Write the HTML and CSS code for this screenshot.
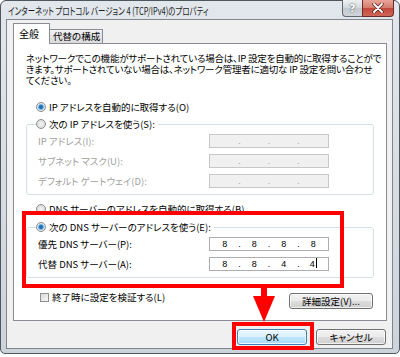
FILE: index.html
```html
<!DOCTYPE html>
<html lang="ja">
<head>
    <meta charset="UTF-8">
    <title>インターネット プロトコル バージョン 4 (TCP/IPv4)のプロパティ</title>
    <link rel="stylesheet" href="styles.css">
</head>
<body>

    <div class="window">
        <div class="title-bar">
            <span class="title">インターネット プロトコル バージョン 4 (TCP/IPv4)のプロパティ</span>
            <div class="caption-buttons">
                <span class="cap help">?</span>
                <span class="cap close">
                    <svg width="12" height="10" viewBox="0 0 12 10">
                        <path d="M2 1 L10 9 M10 1 L2 9" stroke="#5a2520" stroke-width="3.4" stroke-linecap="round"/>
                        <path d="M2 1 L10 9 M10 1 L2 9" stroke="#fff" stroke-width="1.8" stroke-linecap="round"/>
                    </svg>
                </span>
            </div>
        </div>

        <div class="client">
            <div class="tabs">
                <div class="tab active">全般</div>
                <div class="tab">代替の構成</div>
            </div>

            <div class="panel">
                <p class="desc">ネットワークでこの機能がサポートされている場合は、IP 設定を自動的に取得することがで<br>きます。サポートされていない場合は、ネットワーク管理者に適切な IP 設定を問い合わせ<br>てください。</p>

                <div class="option first"><span class="radio on"></span>IP アドレスを自動的に取得する(O)</div>

                <fieldset class="group">
                    <legend><span class="radio"></span>次の IP アドレスを使う(S):</legend>
                    <div class="row off">
                        <span class="label">IP アドレス(I):</span>
                        <div class="ip disabled"><span></span><i>.</i><span></span><i>.</i><span></span><i>.</i><span></span></div>
                    </div>
                    <div class="row off">
                        <span class="label">サブネット マスク(U):</span>
                        <div class="ip disabled"><span></span><i>.</i><span></span><i>.</i><span></span><i>.</i><span></span></div>
                    </div>
                    <div class="row off">
                        <span class="label">デフォルト ゲートウェイ(D):</span>
                        <div class="ip disabled"><span></span><i>.</i><span></span><i>.</i><span></span><i>.</i><span></span></div>
                    </div>
                </fieldset>

                <div class="option second"><span class="radio"></span>DNS サーバーのアドレスを自動的に取得する(B)</div>

                <fieldset class="group dns">
                    <legend><span class="radio on"></span>次の DNS サーバーのアドレスを使う(E):</legend>
                    <div class="row">
                        <span class="label">優先 DNS サーバー(P):</span>
                        <div class="ip"><span>8</span><i>.</i><span>8</span><i>.</i><span>8</span><i>.</i><span>8</span></div>
                    </div>
                    <div class="row">
                        <span class="label">代替 DNS サーバー(A):</span>
                        <div class="ip"><span>8</span><i>.</i><span>8</span><i>.</i><span>4</span><i>.</i><span>4<b class="caret"></b></span></div>
                    </div>
                </fieldset>

                <div class="panel-foot">
                    <div class="check-row"><span class="checkbox"></span>終了時に設定を検証する(L)</div>
                    <button class="btn advanced">詳細設定(V)...</button>
                </div>
            </div>

            <div class="dialog-buttons">
                <button class="btn default">OK</button>
                <button class="btn">キャンセル</button>
            </div>
        </div>

        <!-- red marks over the screenshot -->
        <div class="mark mark-dns"></div>
        <div class="mark mark-ok"></div>
        <svg class="arrow" width="22" height="37" viewBox="0 0 22 37">
            <rect x="8" y="0" width="6" height="11" fill="#f00"/>
            <polygon points="0,10 22,10 11,36" fill="#f00"/>
        </svg>
    </div>

</body>
</html>
```

FILE: styles.css
```css
* {
    box-sizing: border-box;
}

body {
    margin: 0;
    background: #fff;
    font-family: "Noto Sans CJK JP", sans-serif;
    font-size: 9.5px;
    font-feature-settings: "palt";
    color: #000;
}

.window {
    position: relative;
    width: 400px;
    height: 354px;
    border: 1px solid #4e565e;
    border-radius: 6px 6px 5px 5px;
    background: linear-gradient(to bottom, #e2e7ec, #ccd3da);
    display: flex;
    flex-direction: column;
}

.title-bar {
    height: 18px;
    display: flex;
    justify-content: space-between;
    align-items: flex-start;
    padding: 0 5px 0 7px;
}

/* the shot is squeezed sideways, so the caption is too */
.title {
    display: inline-block;
    font-size: 10.5px;
    line-height: 19px;
    color: #1e1e1e;
    white-space: nowrap;
    transform: scaleX(0.71);
    transform-origin: left center;
}

.caption-buttons {
    display: flex;
    margin-top: -1px;
}

.cap {
    height: 17px;
    display: flex;
    justify-content: center;
    align-items: center;
    border: 1px solid #5f6870;
    border-top: none;
}

.help {
    width: 20px;
    border-right: none;
    border-radius: 0 0 0 4px;
    background: linear-gradient(to bottom, #eef0f2, #d3d8dd 50%, #c2c8ce 51%, #d0d5da);
    color: #fff;
    font-family: "DejaVu Sans", sans-serif;
    font-weight: bold;
    font-size: 11px;
    text-shadow: 0 0 2px #59616a, 0 0 1px #59616a;
}

.close {
    width: 32px;
    border-radius: 0 0 4px 0;
    border-color: #6a2c26;
    background: linear-gradient(to bottom, #e8a599, #d47a6c 50%, #c2473a 51%, #d0675a);
}

.client {
    flex: 1;
    margin: 0 6px 4px 5px;
    border: 1px solid #7d8792;
    background: #f0f0f0;
    padding: 0 5px 0 6px;
    display: flex;
    flex-direction: column;
}

.tabs {
    height: 23px;
    display: flex;
    align-items: flex-end;
}

.tab {
    position: relative;
    width: 53px;
    height: 14px;
    padding: 0 0 0 3px;
    border: 1px solid #898c95;
    border-bottom: none;
    border-left: none;
    background: linear-gradient(to bottom, #f3f3f3, #e3e3e3 50%, #dadada);
    line-height: 13px;
    font-size: 9.5px;
}

.tab.active {
    width: 37px;
    height: 21px;
    margin-bottom: -1px;
    padding: 3px 0 0 5px;
    background: #fff;
    border-left: 1px solid #898c95;
    font-size: 10px;
    z-index: 1;
}

.panel {
    border: 1px solid #898c95;
    background: #fff;
    height: 278px;
    padding: 9px 12px 0 12px;
}

.desc {
    margin: 0;
    line-height: 11px;
    white-space: nowrap;
    letter-spacing: -0.2px;
}

.option {
    display: flex;
    align-items: center;
    height: 12px;
    margin-left: 10px;
}

.option.first {
    margin-top: 15px;
}

.option.second {
    margin-top: 8px;
}

.radio {
    width: 10px;
    height: 10px;
    border-radius: 50%;
    border: 1px solid #8a8f94;
    background: radial-gradient(circle, #f4f4f4 0, #dcdcdc 4px);
    margin-right: 3px;
    flex-shrink: 0;
}

.radio.on {
    background: radial-gradient(circle, #1f5fa3 0, #2d7cc4 1.8px, #8fc8ef 2.8px, #ececec 3.4px, #d6d6d6 4px);
}

.group {
    margin: 5px 0 0 0;
    padding: 0 0 6px 0;
    border: 1px solid #d5dfe5;
    border-radius: 3px;
    width: 348px;
}

.group legend {
    display: flex;
    align-items: center;
    height: 12px;
    margin-left: 9px;
    padding: 0 3px 0 0;
}

.dns {
    margin-top: 6px;
}

.row {
    display: flex;
    align-items: center;
    height: 14px;
    margin-top: 6px;
    padding-left: 11px;
}

.group legend + .row {
    margin-top: 4px;
}

.row .label {
    width: 171px;
}

.row.off .label {
    color: #a0a0a0;
}

.ip {
    width: 120px;
    height: 14px;
    border: 1px solid #abadb3;
    background: #fff;
    display: grid;
    grid-template-columns: 1fr 4px 1fr 4px 1fr 4px 1fr;
    padding: 0 2px;
    line-height: 12px;
    text-align: center;
    font-family: "Liberation Sans", sans-serif;
    font-size: 9px;
}

.ip i {
    font-style: normal;
}

.ip.disabled {
    background: #f0f0f0;
    border-color: #c8c8c8;
    color: #9a9a9a;
}

.caret {
    display: inline-block;
    width: 1px;
    height: 10px;
    background: #000;
    vertical-align: -1px;
    margin-left: 1px;
}

.panel-foot {
    display: flex;
    justify-content: space-between;
    align-items: flex-start;
    margin-top: 13px;
}

.check-row {
    display: flex;
    align-items: center;
    height: 12px;
    margin-left: 14px;
}

.checkbox {
    width: 9px;
    height: 9px;
    border: 1px solid #8e8f8f;
    background: linear-gradient(135deg, #dcdcdc, #f6f6f6);
    margin-right: 3px;
}

.btn {
    height: 16px;
    padding: 0;
    border: 1px solid #707070;
    border-radius: 3px;
    background: linear-gradient(to bottom, #f2f2f2, #ebebeb 50%, #dddddd 51%, #cfcfcf);
    box-shadow: inset 0 0 0 1px rgba(255, 255, 255, 0.7);
    font-family: "Noto Sans CJK JP", sans-serif;
    font-feature-settings: "palt";
    font-size: 9.5px;
    line-height: 13px;
    color: #000;
}

.advanced {
    width: 84px;
    margin: 2px 1px 0 0;
}

.dialog-buttons {
    display: flex;
    justify-content: flex-end;
    gap: 9px;
    margin-top: 8px;
    padding-right: 1px;
}

.dialog-buttons .btn {
    width: 70px;
}

.btn.default {
    border-color: #3c7fb1;
    background: linear-gradient(to bottom, #eaf6fd, #d9f0fc 50%, #bee6fd 51%, #a7d9f5);
    box-shadow: inset 0 0 0 1px rgba(255, 255, 255, 0.8);
}

.mark {
    position: absolute;
    border: 4px solid #f00;
}

.mark-dns {
    left: 21px;
    top: 210px;
    width: 322px;
    height: 77px;
}

.mark-ok {
    left: 231px;
    top: 321px;
    width: 82px;
    height: 28px;
}

.arrow {
    position: absolute;
    left: 252px;
    top: 285px;
}
```
